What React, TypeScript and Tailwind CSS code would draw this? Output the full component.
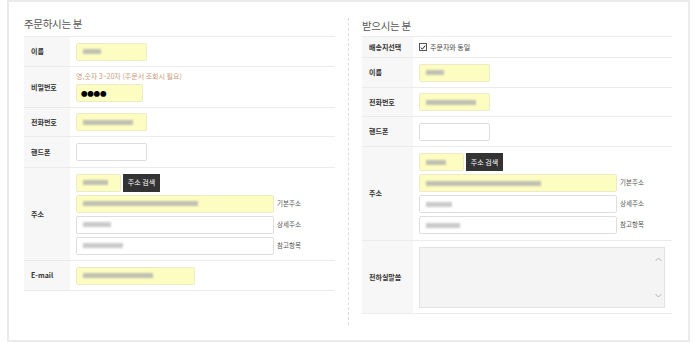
import React from "react";

const font = { fontFamily: '"Noto Sans CJK KR", "Noto Sans", sans-serif' };

function Blur({ w, light }: { w: number; light?: boolean }) {
  return (
    <div
      className={light ? "h-[5px] bg-[#bdbdbd] blur-[1px] opacity-80" : "h-[5px] bg-[#b0b0b0] blur-[1px] opacity-80"}
      style={{ width: w }}
    />
  );
}

function YInput({ w, blur }: { w: number; blur?: number }) {
  return (
    <div
      className="h-[18px] shrink-0 bg-[#fdfdc1] border border-[#ecebc8] rounded-[2px] flex items-center pl-[6px]"
      style={{ width: w }}
    >
      {blur ? <Blur w={blur} /> : null}
    </div>
  );
}

function WInput({ w, blur }: { w: number; blur?: number }) {
  return (
    <div
      className="h-[18px] shrink-0 bg-white border border-[#dedede] rounded-[2px] flex items-center pl-[6px]"
      style={{ width: w }}
    >
      {blur ? <Blur w={blur} light /> : null}
    </div>
  );
}

function Btn() {
  return (
    <div className="h-[18px] w-[37px] bg-[#333333] text-white text-[7px] flex items-center justify-center ml-[2px]">
      주소 검색
    </div>
  );
}

function Row({
  label,
  hcls,
  wcls,
  children,
}: {
  label: string;
  hcls: string;
  wcls: string;
  children: React.ReactNode;
}) {
  return (
    <div className={"flex border-b border-[#ebebeb] " + hcls}>
      <div className={"bg-[#f7f7f7] flex items-center pl-[7px] text-[7px] font-bold text-[#333] shrink-0 " + wcls}>
        {label}
      </div>
      <div className="flex-1 pl-[6px] flex flex-col justify-center">{children}</div>
    </div>
  );
}

function Lbl({ t }: { t: string }) {
  return <span className="text-[6.5px] text-[#555] ml-[3px]">{t}</span>;
}

export default function App() {
  return (
    <div className="w-[700px] h-[348px] bg-white" style={font}>
      <div className="ml-[7px] w-[683px] h-[342px] border-2 border-[#ebebeb] flex pl-[15px]">
        {/* left */}
        <div className="w-[311px] shrink-0">
          <div className="h-[34px] pt-[14px] text-[10.5px] leading-[16px] text-[#555] tracking-[-0.3px]">
            주문하시는 분
          </div>
          <div className="border-t border-[#ebebeb]">
            <Row label="이름" hcls="h-[30px]" wcls="w-[46px]">
              <YInput w={71} blur={18} />
            </Row>
            <Row label="비밀번호" hcls="h-[41px]" wcls="w-[46px]">
              <div className="text-[7px] leading-[10px] text-[#c99d7b] mb-[3px] -mt-[1px]">
                영,숫자 3~20자 (주문서 조회시 필요)
              </div>
              <div className="h-[18px] w-[67px] bg-[#fdfdc1] border border-[#ecebc8] rounded-[2px] flex items-center pl-[4px] text-[6.5px] leading-none text-black tracking-[-0.2px]">
                ●●●●
              </div>
            </Row>
            <Row label="전화번호" hcls="h-[29px]" wcls="w-[46px]">
              <YInput w={71} blur={50} />
            </Row>
            <Row label="핸드폰" hcls="h-[31px]" wcls="w-[46px]">
              <WInput w={71} />
            </Row>
            <Row label="주소" hcls="h-[93px]" wcls="w-[46px]">
              <div className="flex flex-col gap-[3px]">
                <div className="flex">
                  <YInput w={45} blur={25} />
                  <Btn />
                </div>
                <div className="flex items-center">
                  <YInput w={198} blur={115} />
                  <Lbl t="기본주소" />
                </div>
                <div className="flex items-center">
                  <WInput w={198} blur={28} />
                  <Lbl t="상세주소" />
                </div>
                <div className="flex items-center">
                  <WInput w={198} blur={40} />
                  <Lbl t="참고항목" />
                </div>
              </div>
            </Row>
            <Row label="E-mail" hcls="h-[30px]" wcls="w-[46px]">
              <YInput w={119} blur={70} />
            </Row>
          </div>
        </div>
        {/* right */}
        <div className="ml-[13px] mt-[16px] h-[307px] border-l border-dashed border-[#dcdcdc] pl-[13px]">
          <div className="w-[310px]">
            <div className="h-[18px] text-[10.5px] leading-[16px] text-[#555] tracking-[-0.3px]">
              받으시는 분
            </div>
            <div className="border-t border-[#ebebeb]">
              <Row label="배송지선택" hcls="h-[21px]" wcls="w-[51px]">
                <div className="flex items-center">
                  <div className="w-[8px] h-[8px] border border-[#555] bg-white flex items-center justify-center">
                    <svg width="7" height="7" viewBox="0 0 8 8">
                      <path d="M1 4.2 L3.2 6.2 L7 1.5" stroke="#222" strokeWidth="1.3" fill="none" />
                    </svg>
                  </div>
                  <span className="text-[7px] text-[#444] ml-[3px]">주문자와 동일</span>
                </div>
              </Row>
              <Row label="이름" hcls="h-[30px]" wcls="w-[51px]">
                <YInput w={71} blur={18} />
              </Row>
              <Row label="전화번호" hcls="h-[29px]" wcls="w-[51px]">
                <YInput w={71} blur={50} />
              </Row>
              <Row label="핸드폰" hcls="h-[30px]" wcls="w-[51px]">
                <WInput w={71} />
              </Row>
              <Row label="주소" hcls="h-[94px]" wcls="w-[51px]">
                <div className="flex flex-col gap-[3px]">
                  <div className="flex">
                    <YInput w={45} blur={20} />
                    <Btn />
                  </div>
                  <div className="flex items-center">
                    <YInput w={198} blur={115} />
                    <Lbl t="기본주소" />
                  </div>
                  <div className="flex items-center">
                    <WInput w={198} blur={26} />
                    <Lbl t="상세주소" />
                  </div>
                  <div className="flex items-center">
                    <WInput w={198} blur={34} />
                    <Lbl t="참고항목" />
                  </div>
                </div>
              </Row>
              <Row label="전하실말씀" hcls="h-[73px]" wcls="w-[51px]">
                <div className="h-[61px] w-[246px] bg-[#f4f4f4] border border-[#e2e2e2] flex justify-end">
                  <div className="w-[12px] flex flex-col justify-between items-center py-[9px]">
                    <svg width="7" height="5" viewBox="0 0 7 5">
                      <path d="M0.5 4 L3.5 1 L6.5 4" stroke="#b5b5b5" strokeWidth="1" fill="none" />
                    </svg>
                    <svg width="7" height="5" viewBox="0 0 7 5">
                      <path d="M0.5 1 L3.5 4 L6.5 1" stroke="#b5b5b5" strokeWidth="1" fill="none" />
                    </svg>
                  </div>
                </div>
              </Row>
            </div>
          </div>
        </div>
      </div>
    </div>
  );
}
